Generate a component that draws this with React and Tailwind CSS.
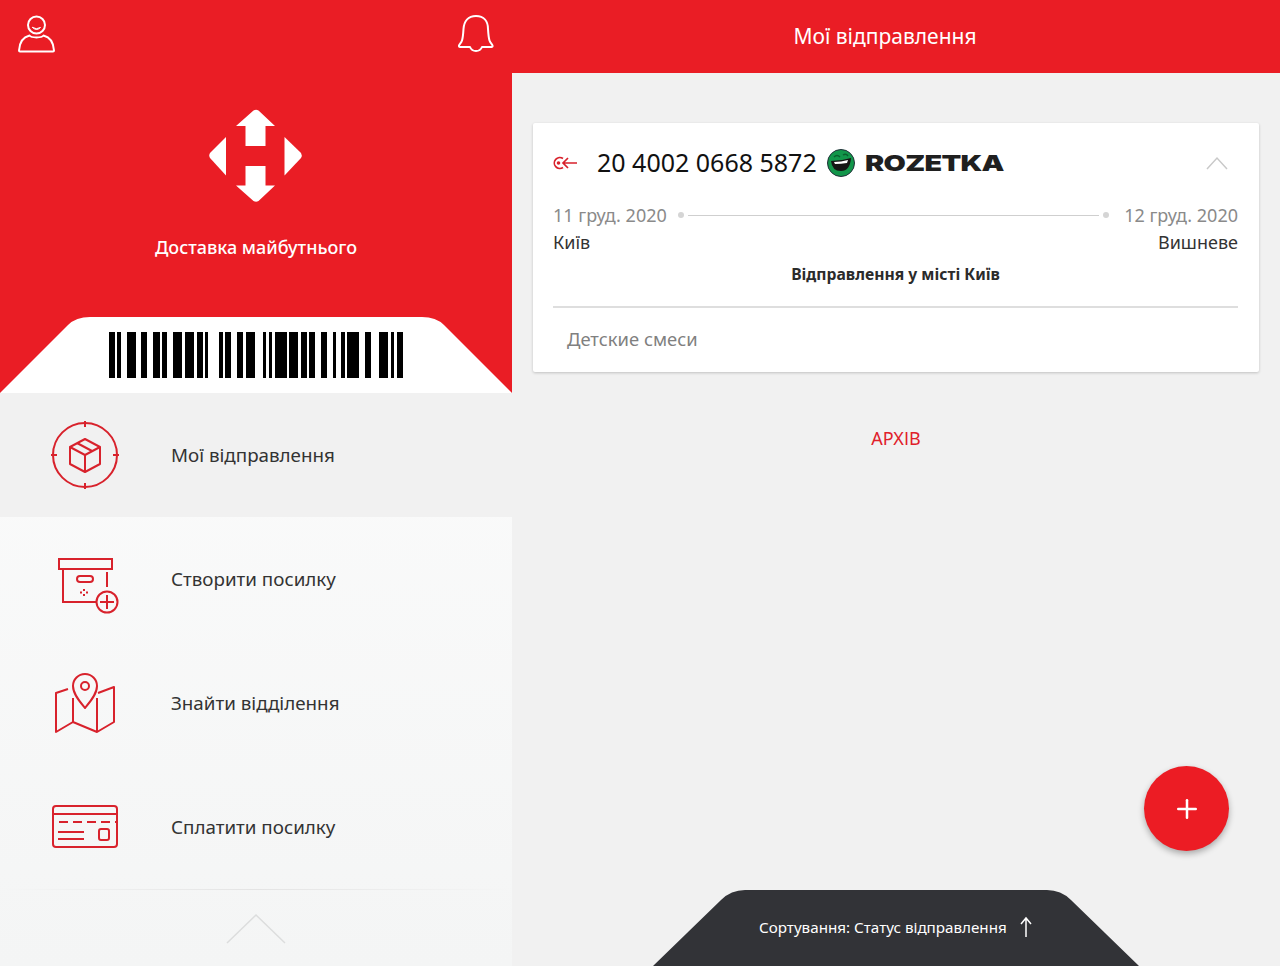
import { Plus } from "lucide-react";

const bars = [
  [109, 6], [117, 4], [127, 9], [141, 6], [153, 7], [162, 5], [173, 9], [185, 9], [197, 6], [205, 3],
  [219, 4], [225, 6], [237, 6], [246, 9], [263, 3], [269, 3], [275, 12], [289, 9], [301, 6], [309, 6],
  [321, 6], [333, 3], [341, 4], [347, 12], [365, 6], [379, 9], [391, 3], [397, 6],
];

function UserIcon() {
  return (
    <svg width="38" height="38" viewBox="0 0 38 38" fill="none" stroke="white" strokeWidth="2" strokeLinecap="round" strokeLinejoin="round">
      <circle cx="18.500" cy="10" r="8.500" />
      <path d="M14.500 12.500q4 2.500 8 0q-4 4-8 0z" fill="white" strokeWidth="1" />
      <path d="M11.500 20.500C5.500 22 1.500 27 1 35.500q0 1 1 1h33q1 0 1-1c-.5-8.500-4.500-13.500-10.500-15-2 2.500-12 2.500-14 0z" />
    </svg>
  );
}

function BellIcon() {
  return (
    <svg width="36" height="38" viewBox="0 0 36 38" fill="none" stroke="white" strokeWidth="2" strokeLinecap="round" strokeLinejoin="round">
      <path d="M18 1C10 1 6 6.500 5.500 14c-.3 5-.5 8.500-1.500 11.500-.8 2.500-2.500 3.500-3 5-.3 1 .3 1.500 1 1.500H12c1 2.500 3.500 4 6 4s5-1.500 6-4h9.500c.7 0 1.300-.5 1-1.500-.5-1.500-2.200-2.500-3-5-1-3-1.200-6.500-1.500-11.500C30 6.500 26 1 18 1z" />
    </svg>
  );
}

function Logo() {
  return (
    <svg width="94" height="94" viewBox="0 0 94 94" fill="white">
      <path d="M36.500 37V17H27L44.500 1.500q2.500-1.500 5 0L66 17H56.500v20z" />
      <path d="M36.500 57v19.500H27l17.500 15.500q2.500 1.500 5 0L66 76.500h-9.500V57z" />
      <path d="M17 28v38.500L1 49q-1.500-2.500 0-5z" />
      <path d="M75.500 28v38.500L92 49q1.500-2.500 0-5z" />
    </svg>
  );
}

function BoxIcon() {
  return (
    <svg width="68" height="68" viewBox="0 0 68 68" fill="none" stroke="#d8222c" strokeWidth="2" strokeLinejoin="round">
      <circle cx="34" cy="34" r="32" />
      <path d="M34 0v6M34 62v6M0 34h6M62 34h6" />
      <path d="M34 18l15 8v17l-15 8-15-8V26z" />
      <path d="M19 26l15 8 15-8M34 34v17M26 22l15 8" />
    </svg>
  );
}

function NewParcelIcon() {
  return (
    <svg className="ml-[6px] mt-[13px]" width="62" height="57" viewBox="0 0 62 57" fill="none" stroke="#d8222c" strokeWidth="2">
      <rect x="2" y="2" width="53" height="10" />
      <path d="M6 13v32h33M50 15v15" />
      <rect x="20" y="19" width="16" height="6" rx="3" />
      <path d="M27 32v2M27 37v2M23 35.500h2M29 35.500h2" />
      <circle cx="50" cy="45" r="10.500" />
      <path d="M50 38v14M43 45h14" />
    </svg>
  );
}

function MapIcon() {
  return (
    <svg width="62" height="60" viewBox="0 0 62 60" fill="none" stroke="#d8222c" strokeWidth="2" strokeLinejoin="round">
      <path d="M31 35c-5-6-12-14-12-22a12 12 0 0 1 24 0c0 8-7 16-12 22z" />
      <circle cx="31" cy="13" r="4" />
      <path d="M14 16L2 20v39l17-10 24 10 17-10V14l-16 6" />
      <path d="M19 25v24M43 25v34" />
    </svg>
  );
}

function CardIcon() {
  return (
    <svg width="66" height="44" viewBox="0 0 66 44" fill="none" stroke="#d8222c" strokeWidth="2">
      <rect x="1" y="1" width="64" height="41" rx="3" />
      <path d="M1 9h64" />
      <path d="M7 17h57" strokeDasharray="9 5" />
      <path d="M6 27h26M6 34h26" />
      <rect x="47" y="24" width="10" height="11" rx="2" />
    </svg>
  );
}

const menu = [
  { label: "Мої відправлення", icon: <BoxIcon />, active: true },
  { label: "Створити посилку", icon: <NewParcelIcon /> },
  { label: "Знайти відділення", icon: <MapIcon /> },
  { label: "Сплатити посилку", icon: <CardIcon /> },
];

function App() {
  return (
    <div className="flex h-[966px] w-[1280px] overflow-hidden font-['Noto_Sans',sans-serif] text-[#2b2b2b]">
      <aside className="flex w-[512px] flex-col bg-gradient-to-b from-white to-[#f4f5f5]">
        <div className="relative h-[393px] bg-[#ea1d25]">
          <div className="flex items-start justify-between px-[18px] pt-[15px]">
            <UserIcon />
            <BellIcon />
          </div>
          <div className="mt-[56px] flex justify-center">
            <Logo />
          </div>
          <p className="mt-[31px] text-center text-[18px] font-medium leading-[26px] text-white">
            Доставка майбутнього
          </p>
          <svg className="absolute bottom-0 left-0" width="512" height="76" viewBox="0 0 512 76">
            <path d="M0 76L68 8Q76 0 90 0H422Q436 0 444 8L512 76z" fill="white" />
            {bars.map(([x, w]) => (
              <rect key={x} x={x} y="15" width={w} height="46" fill="black" />
            ))}
          </svg>
        </div>

        {menu.map((item) => (
          <div
            key={item.label}
            className={`flex h-[124px] items-center ${item.active ? "bg-[#f1f1f1]" : ""}`}
          >
            <div className="mr-px flex w-[170px] shrink-0 justify-center">{item.icon}</div>
            <span className="text-[18.800px] text-[#333]">{item.label}</span>
          </div>
        ))}

        <div className="flex flex-1 flex-col items-center">
          <div className="h-px w-full bg-gradient-to-r from-transparent via-[#e4e4e4] to-transparent" />
          <svg className="mt-[21px]" width="60" height="34" viewBox="0 0 60 34" fill="none" stroke="#dcdddd" strokeWidth="1.500">
            <path d="M1 32L30 4l29 28" />
          </svg>
        </div>
      </aside>

      <main className="relative flex flex-1 flex-col bg-[#f1f1f1]">
        <header className="flex h-[73px] items-center justify-center bg-[#ea1d25] pr-[22px] text-[21px] text-white">
          Мої відправлення
        </header>

        <section className="mx-[21px] mt-[50px] h-[249px] rounded-[2px] bg-white pl-[20px] pr-[21px] shadow-[0_1px_3px_rgba(0,0,0,0.2)]">
          <div className="flex h-[79px] items-center">
            <svg className="-ml-px" width="25" height="14" viewBox="0 0 25 14" fill="none" stroke="#d8222c" strokeWidth="1.700">
              <path d="M11 2.500a5.500 5.500 0 1 0 0 9" />
              <circle cx="6.500" cy="7" r="1.800" fill="#d8222c" stroke="none" />
              <path d="M25 7H11M16 2l-5 5 5 5" />
            </svg>
            <span className="ml-[20px] text-[25px] text-[#111]">20 4002 0668 5872</span>
            <svg className="ml-[9px]" width="30" height="30" viewBox="0 0 30 30">
              <circle cx="15" cy="15" r="13.500" fill="#12964a" stroke="#23303a" strokeWidth="1" />
              <path d="M5 13q10 0 20-3-1 13-10 13T5 13z" fill="#151515" />
              <path d="M8 14q7 0 14-2l-1 3q-6 1-12 1z" fill="white" />
              <path d="M8 9q3-3 6 0M17 7q3-2 5 1" stroke="#0b5e2e" strokeWidth="1.500" fill="none" />
            </svg>
            <span className="ml-[9px] origin-left scale-x-[1.31] font-['Inter',sans-serif] text-[22px] font-black leading-none tracking-tight text-[#1f1f1f]">
              ROZETKA
            </span>
            <svg className="ml-auto mr-[10px]" width="22" height="14" viewBox="0 0 22 14" fill="none" stroke="#c9c9c9" strokeWidth="1.500">
              <path d="M1 13L11 2l10 11" />
            </svg>
          </div>

          <div className="flex items-center text-[18px] leading-[26px] text-[#8a8a8a]">
            <span>11 груд. 2020</span>
            <span className="ml-[11px] h-[6px] w-[6px] rounded-full bg-[#d5d5d5]" />
            <span className="mx-[4px] h-px flex-1 bg-[#cfcfcf]" />
            <span className="mr-[15px] h-[6px] w-[6px] rounded-full bg-[#d5d5d5]" />
            <span>12 груд. 2020</span>
          </div>
          <div className="mt-[1px] flex justify-between text-[18px] leading-[26px] text-[#333]">
            <span>Київ</span>
            <span>Вишневе</span>
          </div>
          <p className="mt-[6px] text-center text-[15.700px] font-bold leading-[26px] text-[#2b2b2b]">
            Відправлення у місті Київ
          </p>
          <div className="mt-[19px] border-t-2 border-[#dedede] pl-[14px] pt-[18px] text-[18.400px] leading-[25px] text-[#808080]">
            Детские смеси
          </div>
        </section>

        <p className="mt-[54px] text-center text-[18px] leading-[25px] text-[#e0202a]">АРХІВ</p>

        <button className="absolute right-[51px] top-[766px] flex h-[85px] w-[85px] items-center justify-center rounded-full bg-[#ec1c24] text-white shadow-[0_3px_6px_rgba(0,0,0,0.3)]">
          <Plus size={30} strokeWidth={2} />
        </button>

        <svg className="absolute bottom-0 left-[141px]" width="486" height="76" viewBox="0 0 486 76">
          <path d="M0 76L68 10Q78 0 92 0H394Q408 0 418 10L486 76z" fill="#323337" />
        </svg>
        <div className="absolute bottom-[27px] left-[247px] flex items-center text-[15.200px] leading-[24px] text-white">
          <span>Сортування: Статус відправлення</span>
          <svg className="ml-[12px]" width="14" height="22" viewBox="0 0 14 22" fill="none" stroke="white" strokeWidth="1.500">
            <path d="M7 21V2M2 8l5-6 5 6" />
          </svg>
        </div>
      </main>
    </div>
  );
}

export default App;
